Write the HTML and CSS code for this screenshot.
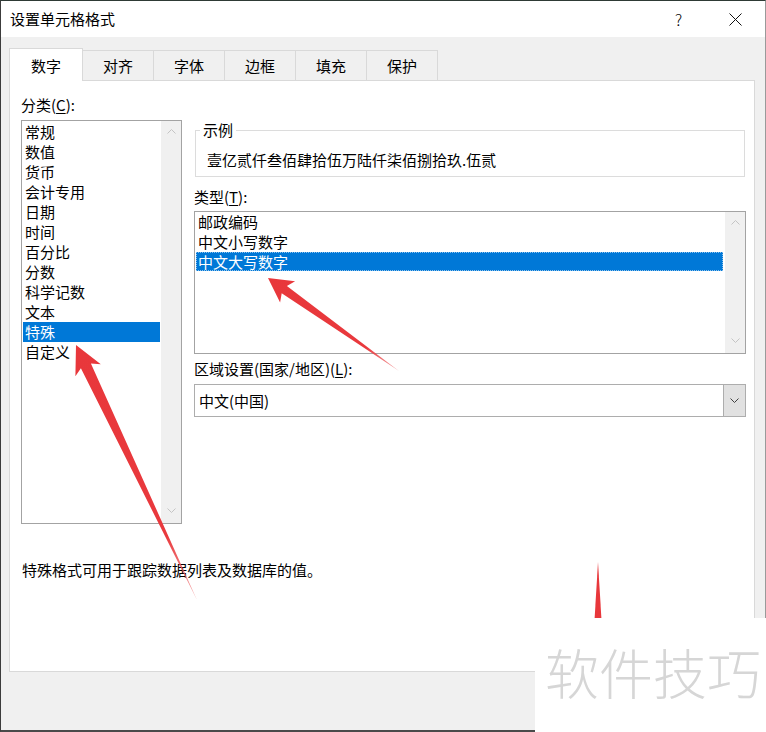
FILE: index.html
```html
<!DOCTYPE html>
<html lang="zh-CN">
<head>
<meta charset="utf-8">
<title>设置单元格格式</title>
<link rel="stylesheet" href="styles.css">
</head>
<body>
<div class="window">
  <div class="titlebar">
    <span class="title">设置单元格格式</span>
    <span class="tb-btn help">?</span>
    <span class="tb-btn close"><svg width="13" height="13" viewBox="0 0 13 13"><path d="M0.5 0.5L12.5 12.5M12.5 0.5L0.5 12.5" fill="none" stroke="#111" stroke-width="1"/></svg></span>
  </div>
  <div class="tabs">
    <div class="tab active">数字</div>
    <div class="tab">对齐</div>
    <div class="tab">字体</div>
    <div class="tab">边框</div>
    <div class="tab">填充</div>
    <div class="tab">保护</div>
  </div>
  <div class="panel">
    <div class="cols">
      <div class="col-left">
        <div class="label">分类(<u>C</u>):</div>
        <div class="listbox cat">
          <ul class="items">
            <li>常规</li>
            <li>数值</li>
            <li>货币</li>
            <li>会计专用</li>
            <li>日期</li>
            <li>时间</li>
            <li>百分比</li>
            <li>分数</li>
            <li>科学记数</li>
            <li>文本</li>
            <li class="sel">特殊</li>
            <li>自定义</li>
          </ul>
          <div class="vscroll">
            <svg width="9" height="5" viewBox="0 0 9 5"><path d="M0.5 4.5L4.5 0.5L8.5 4.5" fill="none" stroke="#c4c4c4"/></svg>
            <svg width="9" height="5" viewBox="0 0 9 5"><path d="M0.5 0.5L4.5 4.5L8.5 0.5" fill="none" stroke="#c4c4c4"/></svg>
          </div>
        </div>
      </div>
      <div class="col-right">
        <fieldset class="sample">
          <legend>示例</legend>
          <div class="sample-text">壹亿贰仟叁佰肆拾伍万陆仟柒佰捌拾玖.伍贰</div>
        </fieldset>
        <div class="label gap-type">类型(<u>T</u>):</div>
        <div class="listbox types">
          <ul class="items">
            <li>邮政编码</li>
            <li>中文小写数字</li>
            <li class="sel focus">中文大写数字</li>
          </ul>
          <div class="vscroll">
            <svg width="9" height="5" viewBox="0 0 9 5"><path d="M0.5 4.5L4.5 0.5L8.5 4.5" fill="none" stroke="#c4c4c4"/></svg>
            <svg width="9" height="5" viewBox="0 0 9 5"><path d="M0.5 0.5L4.5 4.5L8.5 0.5" fill="none" stroke="#c4c4c4"/></svg>
          </div>
        </div>
        <div class="label gap-locale">区域设置(国家/地区)(<u>L</u>):</div>
        <div class="combo">
          <span class="combo-text">中文(中国)</span>
          <span class="combo-btn"><svg width="9" height="5" viewBox="0 0 9 5"><path d="M0.5 0.5L4.5 4.5L8.5 0.5" fill="none" stroke="#404040"/></svg></span>
        </div>
      </div>
    </div>
    <p class="desc">特殊格式可用于跟踪数据列表及数据库的值。</p>
  </div>
</div>

<svg class="arrows" width="766" height="732" viewBox="0 0 766 732">
  <defs>
    <linearGradient id="g1" gradientUnits="userSpaceOnUse" x1="76" y1="345" x2="197" y2="600">
      <stop offset="0" stop-color="#e8373b"/>
      <stop offset="0.75" stop-color="#e9393d"/>
      <stop offset="1" stop-color="#ee6a6c" stop-opacity="0.6"/>
    </linearGradient>
    <linearGradient id="g2" gradientUnits="userSpaceOnUse" x1="268" y1="278" x2="399" y2="371">
      <stop offset="0" stop-color="#e8373b"/>
      <stop offset="0.75" stop-color="#e9393d"/>
      <stop offset="1" stop-color="#ee6a6c" stop-opacity="0.6"/>
    </linearGradient>
  </defs>
  <polygon fill="url(#g1)" points="76,345 100.8,364.3 90.9,363.4 197,600 80.9,368.2 75.4,376.3"/>
  <polygon fill="url(#g2)" points="268,278 295.1,281.3 286.9,285.9 399,371 281.7,293.3 280.1,302.5"/>
  <polygon fill="#e8373b" points="598,562 601.5,620 594.5,620"/>
</svg>
<div class="watermark">软件技巧</div>
</body>
</html>
```

FILE: styles.css
```css
html, body {
  margin: 0;
  padding: 0;
}

body {
  position: relative;
  width: 766px;
  height: 732px;
  overflow: hidden;
  background: #f0f0f0;
  font-family: "Noto Sans CJK SC", "Noto Sans", sans-serif;
  font-size: 15px;
  color: #000;
}

.window {
  width: 766px;
  height: 732px;
  box-sizing: border-box;
  border-top: 1px solid #2e3a35;
  border-left: 1px solid #3c3c3c;
  border-right: 1px solid #9a9a9a;
  border-bottom: 2px solid #4a4a4a;
  background: #f0f0f0;
}

/* title bar */
.titlebar {
  height: 36px;
  background: #fff;
  display: flex;
  align-items: center;
  padding-left: 9px;
}

.title {
  line-height: 20px;
}

.tb-btn {
  width: 57px;
  display: flex;
  justify-content: center;
  align-items: center;
  line-height: 20px;
}

.help {
  margin-left: auto;
  font-weight: 300;
  font-size: 16px;
}

.close {
  margin-right: 1px;
}

/* tabs */
.tabs {
  display: flex;
  align-items: flex-end;
  margin-top: 11px;
  padding-left: 8px;
}

.tab {
  box-sizing: border-box;
  width: 71px;
  height: 30px;
  border-top: 1px solid #d9d9d9;
  border-right: 1px solid #d9d9d9;
  display: flex;
  align-items: center;
  justify-content: center;
  line-height: 20px;
}

.tab.active {
  width: 74px;
  height: 33px;
  border-left: 1px solid #d9d9d9;
  background: #fff;
  margin-bottom: -1px;
  padding-top: 2px;
  position: relative;
  z-index: 1;
}

/* panel */
.panel {
  margin-left: 8px;
  width: 746px;
  height: 592px;
  box-sizing: border-box;
  border: 1px solid #d9d9d9;
  background: #fff;
  padding: 14px 0 0 11px;
}

.cols {
  display: flex;
  align-items: flex-start;
  gap: 12px;
}

.col-left {
  width: 161px;
}

.col-right {
  width: 552px;
}

.label {
  line-height: 20px;
  height: 20px;
}

.label u {
  text-decoration-thickness: 1px;
  text-underline-offset: 2px;
}

/* list boxes */
.listbox {
  box-sizing: border-box;
  border: 1px solid #a3a3a3;
  display: flex;
  background: #fff;
}

.listbox.cat {
  margin-top: 5px;
  height: 404px;
}

.listbox.types {
  margin-top: 4px;
  height: 143px;
}

.items {
  flex: 1;
  list-style: none;
  margin: 0;
  padding: 1px 1px 0 1px;
}

.types .items {
  padding-top: 0;
  padding-right: 2px;
}

.items li {
  line-height: 20px;
  height: 20px;
  padding-left: 2px;
  white-space: nowrap;
}

.items li.sel {
  background: #0078d7;
  color: #fff;
}

.items li.focus {
  height: 19px;
  line-height: 19px;
  outline: 1px dotted #8cc2ee;
  outline-offset: -1px;
}

.vscroll {
  width: 20px;
  background: #f0f0f0;
  display: flex;
  flex-direction: column;
  justify-content: space-between;
  align-items: center;
  padding: 8px 0 10px;
  box-sizing: border-box;
}

.vscroll svg {
  display: block;
}

/* sample group */
.sample {
  margin: 25px 1px 0;
  padding: 10px 10px 6px 4px;
  border: 1px solid #dcdcdc;
  min-width: 0;
}

.sample legend {
  padding: 0 3px;
  line-height: 20px;
}

.sample-text {
  line-height: 20px;
  padding-left: 7px;
  white-space: nowrap;
}

.gap-type {
  margin-top: 10px;
}

.gap-locale {
  margin-top: 5px;
}

/* combo */
.combo {
  margin-top: 5px;
  height: 33px;
  box-sizing: border-box;
  border: 1px solid #adadad;
  display: flex;
  align-items: stretch;
}

.combo-text {
  flex: 1;
  display: flex;
  align-items: center;
  padding-left: 4px;
  line-height: 20px;
}

.combo-btn {
  width: 21px;
  background: #e1e1e1;
  border-left: 1px solid #adadad;
  display: flex;
  align-items: center;
  justify-content: center;
}

.combo-btn svg {
  display: block;
}

.desc {
  margin: 36px 0 0 1px;
  line-height: 20px;
}

/* overlays */
.arrows {
  position: absolute;
  left: 0;
  top: 0;
  pointer-events: none;
}

.watermark {
  position: absolute;
  left: 535px;
  top: 618px;
  width: 231px;
  height: 114px;
  box-sizing: border-box;
  background: #fff;
  padding: 27px 0 0 10px;
  font-size: 54px;
  line-height: 54px;
  font-weight: 300;
  color: #d6d6d6;
  white-space: nowrap;
}
```
